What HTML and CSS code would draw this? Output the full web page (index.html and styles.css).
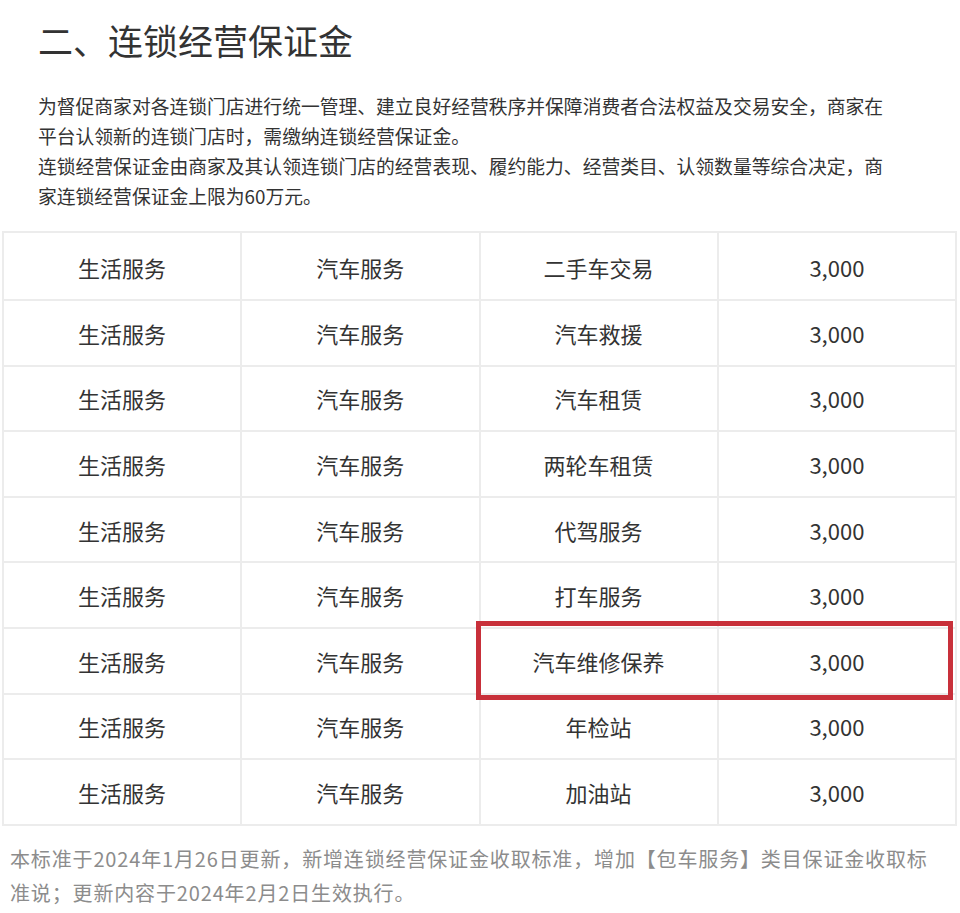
FILE: index.html
```html
<!DOCTYPE html>
<html lang="zh-CN">
<head>
<meta charset="utf-8">
<title>连锁经营保证金</title>
<link rel="stylesheet" href="styles.css">
</head>
<body>
<div class="page">
  <h2 class="title">二、连锁经营保证金</h2>
  <p class="intro">为督促商家对各连锁门店进行统一管理、建立良好经营秩序并保障消费者合法权益及交易安全，商家在<br>平台认领新的连锁门店时，需缴纳连锁经营保证金。<br>连锁经营保证金由商家及其认领连锁门店的经营表现、履约能力、经营类目、认领数量等综合决定，商<br>家连锁经营保证金上限为60万元。</p>
  <table class="deposit">
    <tbody>
      <tr class="first"><td>生活服务</td><td>汽车服务</td><td>二手车交易</td><td>3,000</td></tr>
      <tr><td>生活服务</td><td>汽车服务</td><td>汽车救援</td><td>3,000</td></tr>
      <tr><td>生活服务</td><td>汽车服务</td><td>汽车租赁</td><td>3,000</td></tr>
      <tr><td>生活服务</td><td>汽车服务</td><td>两轮车租赁</td><td>3,000</td></tr>
      <tr><td>生活服务</td><td>汽车服务</td><td>代驾服务</td><td>3,000</td></tr>
      <tr><td>生活服务</td><td>汽车服务</td><td>打车服务</td><td>3,000</td></tr>
      <tr><td>生活服务</td><td>汽车服务</td><td class="marked">汽车维修保养<span class="highlight"></span></td><td>3,000</td></tr>
      <tr><td>生活服务</td><td>汽车服务</td><td>年检站</td><td>3,000</td></tr>
      <tr><td>生活服务</td><td>汽车服务</td><td>加油站</td><td>3,000</td></tr>
    </tbody>
  </table>
  <p class="note">本标准于2024年1月26日更新，新增连锁经营保证金收取标准，增加【包车服务】类目保证金收取标<br>准说；更新内容于2024年2月2日生效执行。</p>
</div>
</body>
</html>
```

FILE: styles.css
```css
html, body {
  margin: 0;
  padding: 0;
  background: #ffffff;
}

body {
  font-family: "Noto Sans CJK SC", "Noto Sans", sans-serif;
  color: #333333;
  width: 960px;
  height: 913px;
  overflow: hidden;
}

.page {
  display: flex;
  flex-direction: column;
}

.title {
  margin: 15px 0 0 38px;
  font-size: 35px;
  line-height: 50px;
  font-weight: 400;
  color: #333333;
}

.intro {
  margin: 26px 0 0 38px;
  font-size: 18.8px;
  line-height: 30px;
  color: #333333;
  white-space: nowrap;
}

.deposit {
  margin: 20px 0 0 2px;
  width: 955px;
  border-collapse: collapse;
  table-layout: fixed;
  border: 2px solid #ececec;
}

.deposit td {
  border: 2px solid #ececec;
  padding: 0;
  height: 63.6px;
  text-align: center;
  vertical-align: middle;
  font-size: 22px;
  color: #333333;
}

.deposit tr.first td {
  height: 64px;
  padding-top: 2px;
}

.deposit td.marked {
  position: relative;
}

.highlight {
  position: absolute;
  left: -5px;
  top: -8px;
  width: 467px;
  height: 69px;
  border: 5px solid #c8303a;
  pointer-events: none;
}

.note {
  margin: 16px 0 0 10px;
  font-size: 20px;
  letter-spacing: 0.85px;
  line-height: 34px;
  color: #8c8c8c;
  white-space: nowrap;
}
```
